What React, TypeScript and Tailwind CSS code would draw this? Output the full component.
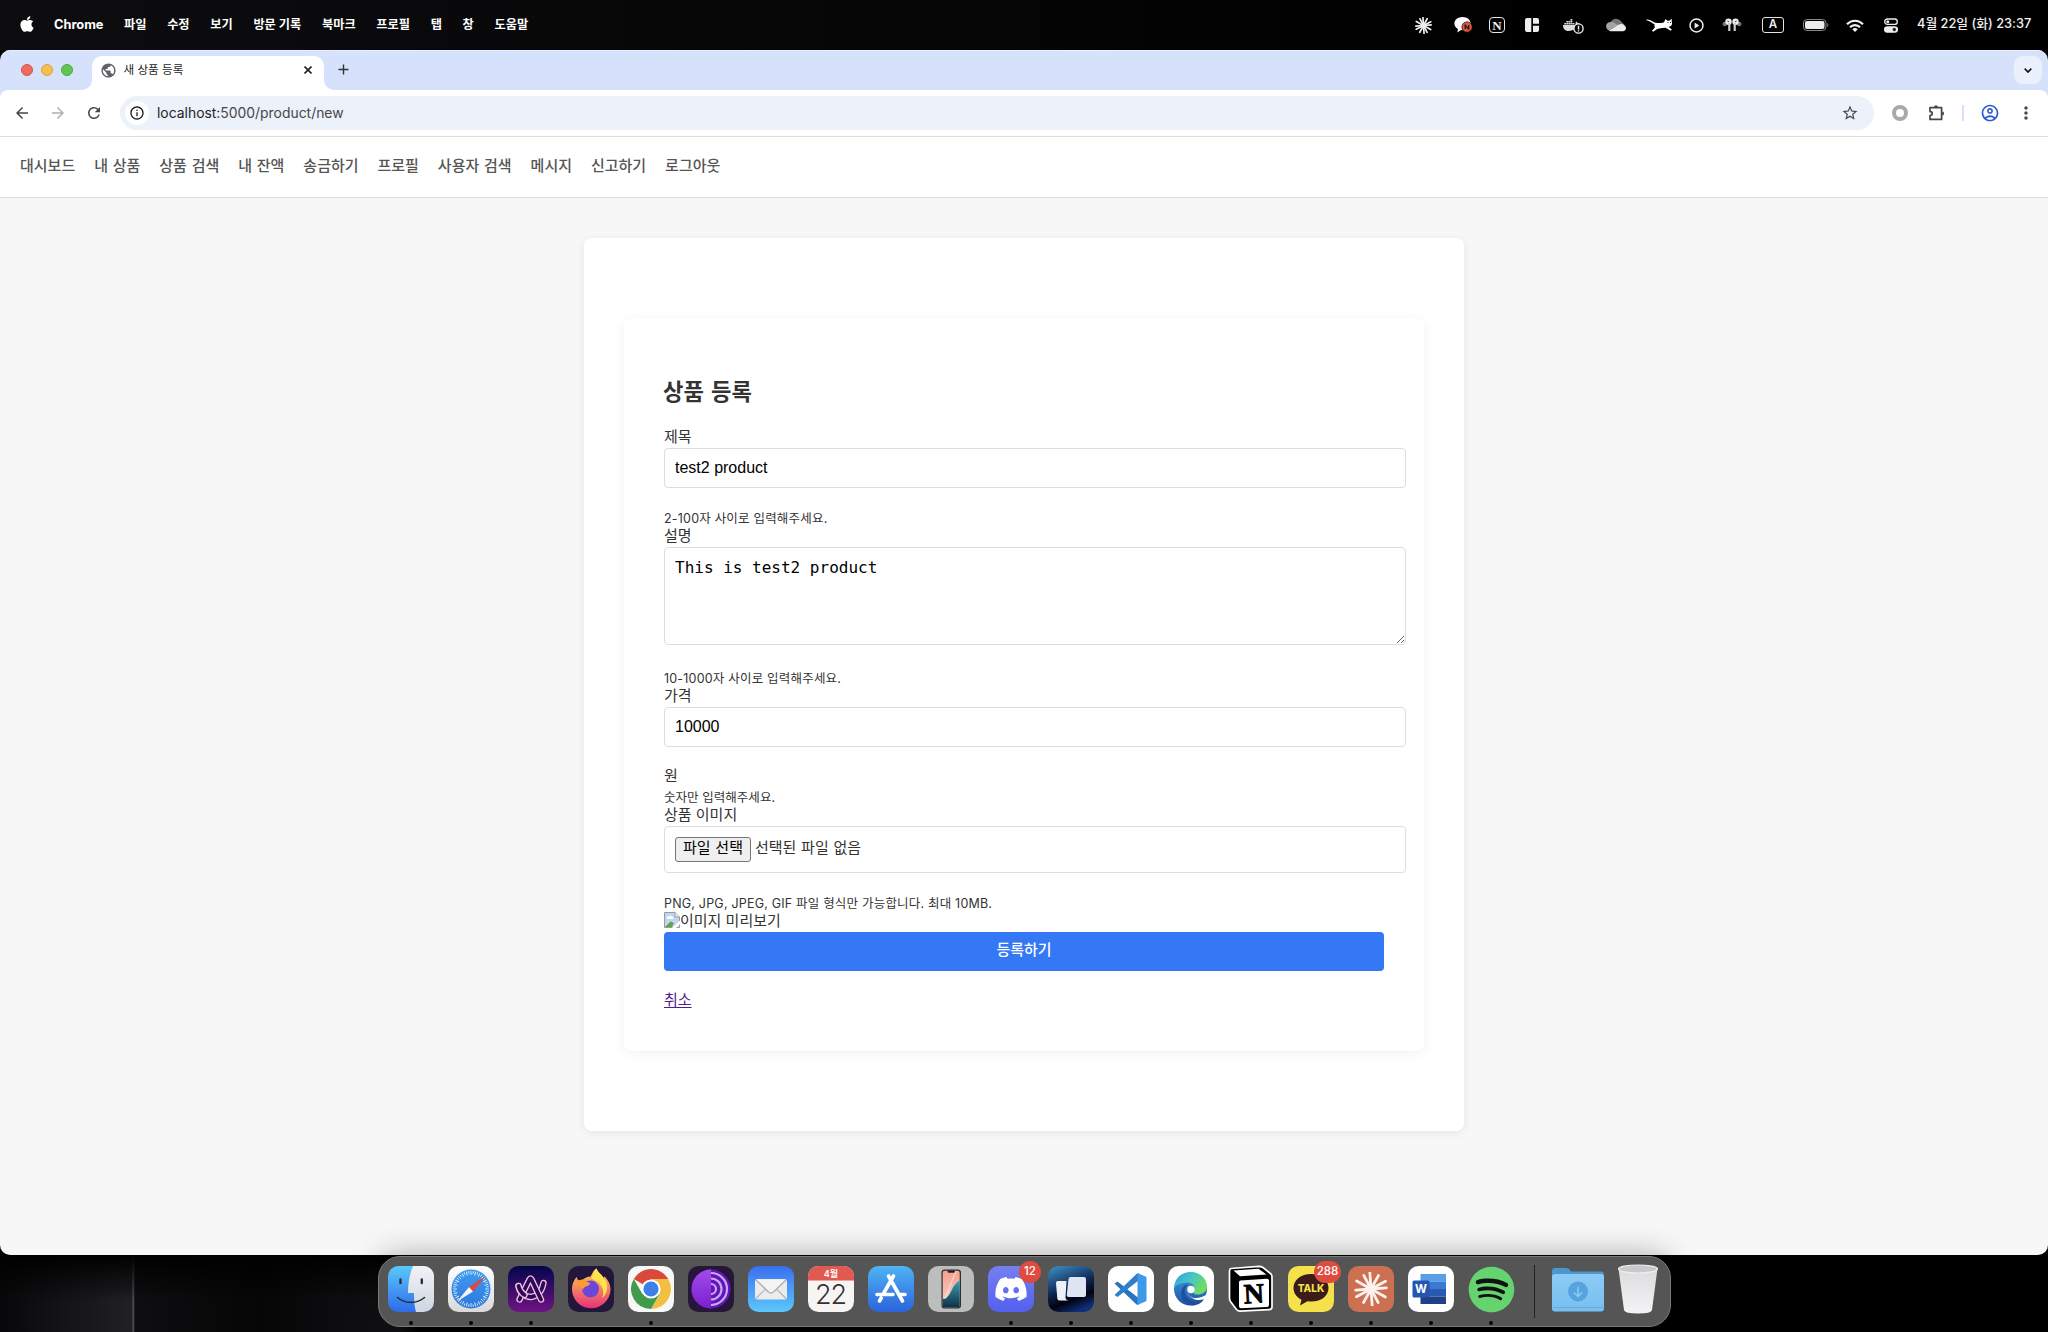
import React from "react";
import { FaApple, FaDiscord, FaDocker, FaSpotify } from "react-icons/fa";
import {
  MdAdd,
  MdArrowBack,
  MdArrowForward,
  MdInfoOutline,
  MdMoreVert,
  MdOutlineAccountCircle,
  MdPublic,
  MdRefresh,
  MdStarOutline,
} from "react-icons/md";

const rays = (n: number) => Array.from({ length: n }, (_, i) => (i * 360) / n);

function Burst({ className, color, width }: { className: string; color: string; width: number }) {
  return (
    <svg viewBox="0 0 32 32" className={className}>
      {rays(12).map((a, i) => (
        <line
          key={a}
          x1="16"
          y1="16"
          x2="16"
          y2={i % 2 ? 1.5 : 0.5}
          stroke={color}
          strokeWidth={width}
          strokeLinecap="round"
          transform={`rotate(${a + (i % 3) * 3 - 4} 16 16)`}
        />
      ))}
    </svg>
  );
}

/* ---------- menu bar ---------- */

const menus = ["파일", "수정", "보기", "방문 기록", "북마크", "프로필", "탭", "창", "도움말"];

function MenuBar() {
  return (
    <header className="flex h-[50px] items-center bg-gradient-to-r from-[#0d0d0f] via-[#050506] via-50% to-black text-white">
      <FaApple className="ml-[19px] h-[18px] w-[16px] -translate-y-px" />
      <span className="ml-[19px] w-[51px] text-[12.8px] font-bold">Chrome</span>
      <nav className="ml-[19px] flex gap-[20.700px] text-[12.2px] font-semibold">
        {menus.map((m) => (
          <span key={m} className="whitespace-nowrap">{m}</span>
        ))}
      </nav>
      <div className="ml-auto flex items-center">
        <Burst className="h-[17px] w-[17px]" color="#eee" width={3.2} />
        <svg viewBox="0 0 18 18" className="ml-[22px] h-[18px] w-[18px]">
          <path d="M8.500 1C4 1 .4 3.800.4 7.600c0 2.500 1.500 4.300 3.600 5.500L3.300 16.500l3.700-2.400c5.500.4 9.600-2.500 9.600-6.500C16.600 3.800 13 1 8.500 1Z" fill="#fff" />
          <circle cx="13" cy="11" r="5.200" fill="#e2543a" stroke="#000" strokeWidth=".6" />
          <path d="M11.300 13.200V9.300l3.400 3.600V8.900" fill="none" stroke="#222" strokeWidth="1.400" />
        </svg>
        <span className="ml-[17px] flex h-4 w-4 items-center justify-center rounded-[4px] border-[1.5px] border-[#e5e5e5] font-['Liberation_Serif'] text-[13px] leading-none font-bold text-[#eee]">N</span>
        <svg viewBox="0 0 14 14" className="ml-5 h-[14px] w-[14px]" fill="#eee">
          <path d="M2 0H6.300V14H2a2 2 0 0 1-2-2V2a2 2 0 0 1 2-2ZM8 0h4a2 2 0 0 1 2 2V5.800H8ZM8 7.800h6V12a2 2 0 0 1-2 2H8Z" />
        </svg>
        <span className="relative ml-[26px] h-4 w-[19px]">
          <FaDocker className="-ml-0.5 h-4 w-[17px] text-[#ddd]" />
          <svg viewBox="0 0 12 12" className="absolute right-0 -bottom-px h-[11px] w-[11px]">
            <circle cx="6" cy="6" r="5" fill="#000" stroke="#eee" strokeWidth="1.500" />
            <path d="M6 3v4M6 8v1.200" stroke="#eee" strokeWidth="1.600" />
          </svg>
        </span>
        <svg viewBox="0 0 20 14" className="ml-[22px] h-[14px] w-[20px]">
          <path d="M4.500 4.500A6 6 0 0 1 15 3.300L18.500 7 8 9.500Z" fill="#777" />
          <path d="M4.200 4C8 3.800 9.500 6 12 7L3 12.500C-1 10.500-1 4.800 4.200 4Z" fill="#a5a5a5" />
          <path d="M3 12.500 13 6.500C15 5 20 6.500 20 10.300 20 12 18.500 13.200 17 13.200H4.500C3.800 13.200 3.300 13 3 12.500Z" fill="#ececec" />
        </svg>
        <svg viewBox="0 0 27 14" className="ml-5 h-[14px] w-[27px]" fill="#fff">
          <path d="M.5 1.500C4 .8 6.500 3.800 9.500 4.800c3 .6 6 .3 8.500-.6L19.500 1l2 1.700h1.800L25.500.8l.6 5c-.4 2-1.600 2.700-3.600 3l3.300 2.700-1 1.200-5.300-3-3.500.2-4.800 1-4 2.800-1.200-1 3-3.500c-.6-1.200-.7-2.200-.4-3C5.500 5.200 4 2.500.5 2.500Z" />
          <circle cx="22" cy="4.500" r=".6" fill="#000" /><circle cx="24.600" cy="4.500" r=".6" fill="#000" />
        </svg>
        <svg viewBox="0 0 16 16" className="ml-4 h-[15px] w-[15px]">
          <circle cx="8" cy="8" r="6.900" fill="none" stroke="#eee" strokeWidth="1.600" />
          <path d="M6 4.800v6.400l5-3.200Z" fill="#eee" />
        </svg>
        <svg viewBox="0 0 20 14" className="ml-[18px] h-[14px] w-[20px]">
          <circle cx="2.800" cy="6" r="2.300" fill="#777" /><circle cx="17.200" cy="6" r="2.300" fill="#777" />
          <circle cx="6.500" cy="3.800" r="3.200" fill="#eee" /><circle cx="13.500" cy="3.800" r="3.200" fill="#eee" />
          <path d="M7.300 5v8M12.700 5v8" stroke="#ccc" strokeWidth="2.200" />
          <path d="M5.500 3l1.500 1M14.500 3 13 4" stroke="#333" strokeWidth="1" />
        </svg>
        <span className="ml-5 flex h-4 w-[22px] items-center justify-center rounded-[3px] border-[1.5px] border-[#e5e5e5] text-[11.5px] leading-none font-semibold text-[#eee]">A</span>
        <svg viewBox="0 0 26 12" className="ml-[19px] h-3 w-[26px]">
          <rect x=".5" y=".5" width="22.500" height="11" rx="3.500" fill="none" stroke="#888" />
          <rect x="2" y="2" width="19.500" height="8" rx="2" fill="#ececec" />
          <path d="M24.300 4c1.400.6 1.400 3.400 0 4Z" fill="#888" />
        </svg>
        <svg viewBox="0 0 18 13" className="ml-[17px] h-[13px] w-[18px]" fill="none" stroke="#f2f2f2" strokeWidth="2.200">
          <path d="M1 5.200C5.500.6 12.500.6 17 5.200M4 8.200c2.800-2.900 7.200-2.900 10 0" />
          <path d="M6.300 10.200Q9 8 11.700 10.200L9 13Z" fill="#f2f2f2" stroke="none" />
        </svg>
        <svg viewBox="0 0 14 15" className="ml-[20px] h-[15px] w-[14px]">
          <rect x=".7" y="1" width="12.600" height="5.400" rx="2.700" fill="none" stroke="#eee" strokeWidth="1.300" />
          <circle cx="3.800" cy="3.700" r="1.500" fill="#eee" />
          <rect x="0" y="8.200" width="14" height="6.600" rx="3.300" fill="#eee" />
          <circle cx="10.300" cy="11.500" r="1.700" fill="#222" />
        </svg>
        <span className="mr-4 ml-[19px] w-[115px] -translate-y-px text-[12.8px] font-medium whitespace-nowrap text-[#f0f0f0]">4월 22일 (화) 23:37</span>
      </div>
    </header>
  );
}

/* ---------- browser chrome ---------- */

function TabStrip() {
  return (
    <div className="flex h-10 items-end bg-[#d6e1fb] shadow-[inset_0_1px_0_#e8eefc]">
      <div className="mb-[14px] ml-[21px] flex w-[61px] gap-2">
        <i className="h-3 w-3 rounded-full border border-[#d9534a] bg-[#ed6a5f]" />
        <i className="h-3 w-3 rounded-full border border-[#dfa03c] bg-[#f5bf4f]" />
        <i className="h-3 w-3 rounded-full border border-[#4faa3c] bg-[#61c554]" />
      </div>
      <svg viewBox="0 0 10 10" className="h-[10px] w-[10px]"><path d="M10 0v10H0A10 10 0 0 0 10 0Z" fill="#fff" /></svg>
      <div className="flex h-[34px] w-[232px] items-center rounded-t-[10px] bg-white pb-[6px]">
        <MdPublic className="ml-[7.500px] h-[17px] w-[17px] text-[#5f6368]" />
        <span className="ml-[7px] pt-px text-[11.6px] text-[#1f1f1f]">새 상품 등록</span>
        <svg viewBox="0 0 8 8" className="mr-3 ml-auto h-2 w-2" stroke="#222" strokeWidth="1.600"><path d="M.5.500l7 7M7.500.500l-7 7" /></svg>
      </div>
      <svg viewBox="0 0 10 10" className="h-[10px] w-[10px]"><path d="M0 0v10H10A10 10 0 0 1 0 0Z" fill="#fff" /></svg>
      <MdAdd className="mb-[12px] ml-px h-[17px] w-[17px] text-[#333]" />
      <span className="mr-[6px] mb-[6px] ml-auto flex h-7 w-7 items-center justify-center rounded-[9px] bg-[#ebf1fc]">
        <svg viewBox="0 0 8 5" className="h-[5px] w-2" fill="none" stroke="#111" strokeWidth="1.700"><path d="M.7.700 4 4 7.300.700" /></svg>
      </span>
    </div>
  );
}

function Toolbar() {
  return (
    <div className="bg-[#d6e1fb]">
      <div className="flex h-[47px] items-center rounded-t-[8px] border-b border-[#dddddd] bg-white">
        <MdArrowBack className="ml-[13px] h-[18px] w-[18px] text-[#474747]" />
        <MdArrowForward className="ml-[18px] h-[18px] w-[18px] text-[#b0b0b0]" />
        <MdRefresh className="ml-[18px] h-[18px] w-[18px] text-[#474747]" />
        <div className="ml-[17px] flex h-[34px] w-[1754px] items-center rounded-full bg-[#ecf1fa]">
          <span className="ml-[5px] flex h-6 w-6 items-center justify-center rounded-full bg-white">
            <MdInfoOutline className="h-4 w-4 text-[#1f1f1f]" />
          </span>
          <span className="ml-[8px] text-[13.900px] text-[#1f1f1f]">
            localhost:<span className="text-[#474747]">5000/product/new</span>
          </span>
          <MdStarOutline className="mr-[15px] ml-auto h-[18px] w-[18px] text-[#474747]" />
        </div>
        <i className="ml-[18px] h-4 w-4 rounded-full border-[4.500px] border-[#a8a8a8]" />
        <svg viewBox="0 0 18 18" className="ml-5 h-[18px] w-[18px]" fill="none" stroke="#474747" strokeWidth="1.700">
          <path d="M2 3.700H13.600V15.400H2V11.500C5 11.300 5 7.800 2 7.600Z" strokeLinejoin="round" />
          <path d="M6.100 3.200a1.900 1.900 0 0 1 3.800 0ZM14.200 7.600a1.900 1.900 0 0 1 0 3.800Z" fill="#474747" stroke="none" />
        </svg>
        <i className="ml-[16px] h-4 w-[2px] bg-[#d3e1fb]" />
        <MdOutlineAccountCircle className="ml-[16px] h-5 w-5 text-[#2c5bd0]" />
        <MdMoreVert className="ml-[16px] h-5 w-5 text-[#474747]" />
      </div>
    </div>
  );
}

/* ---------- page ---------- */

const links = ["대시보드", "내 상품", "상품 검색", "내 잔액", "송금하기", "프로필", "사용자 검색", "메시지", "신고하기", "로그아웃"];

function Label({ children, className = "h-5 pb-0.5" }: { children: React.ReactNode; className?: string }) {
  return <div className={`flex items-center text-[15px] whitespace-pre text-[#333] ${className}`}>{children}</div>;
}

function Hint({ children, className = "tracking-[0.2px]" }: { children: React.ReactNode; className?: string }) {
  return (
    <div className={`flex h-[19px] items-center pt-[3px] text-[12.500px] whitespace-pre text-[#333] ${className}`}>{children}</div>
  );
}

const box = "w-[742px] rounded-[4px] border border-[#ddd] bg-white px-[10px] text-black outline-none";

function ProductPage() {
  return (
    <div className="flex grow flex-col bg-[#f7f7f7]">
      <nav className="flex h-[61px] items-center gap-[18.950px] border-b border-[#dedede] bg-white pb-0.5 pl-5 text-[15px] font-medium text-[#555] [word-spacing:0.8px]">
        {links.map((l) => (
          <span key={l} className="whitespace-nowrap">{l}</span>
        ))}
      </nav>
      <main className="mx-auto mt-10 h-[893px] w-[880px] rounded-[8px] bg-white p-10 shadow-[0_2px_10px_rgba(0,0,0,0.07)]">
        <form className="mt-10 h-[733px] rounded-[8px] bg-white px-10 pt-[60px] shadow-[0_2px_12px_rgba(0,0,0,0.06)]">
          <h2 className="mb-5 -ml-px flex h-7 items-center text-[22.200px] font-bold text-[#333] [word-spacing:2px]">상품 등록</h2>
          <Label className="h-[22px]">제목</Label>
          <input className={`${box} mb-5 block h-10 font-['Liberation_Sans'] text-[16px]`} defaultValue="test2 product" />
          <Hint>2-100자 사이로 입력해주세요.</Hint>
          <Label>설명</Label>
          <textarea
            className={`${box} mb-[23px] block h-[98px] resize py-[10px] font-['DejaVu_Sans_Mono'] text-[16px] leading-[19px]`}
            defaultValue="This is test2 product"
          />
          <Hint>10-1000자 사이로 입력해주세요.</Hint>
          <Label>가격</Label>
          <input className={`${box} mb-[19px] block h-10 font-['Liberation_Sans'] text-[16px]`} defaultValue="10000" />
          <Label className="h-[21px]">원</Label>
          <Hint className="tracking-[0.04px]">숫자만 입력해주세요.</Hint>
          <Label>상품 이미지</Label>
          <div className={`${box} mb-5 flex h-[47px] items-center text-[15px] [word-spacing:0.5px]`}>
            <span className="flex h-[25px] w-[76px] items-center justify-center rounded-[3px] border border-[#767676] bg-[#efefef] pb-[3px] whitespace-nowrap">파일 선택</span>
            <span className="ml-1 pb-[3px] text-[#333]">선택된 파일 없음</span>
          </div>
          <Hint>PNG, JPG, JPEG, GIF 파일 형식만 가능합니다. 최대 10MB.</Hint>
          <div className="flex h-5 items-start">
            <svg viewBox="0 0 16 16" className="h-4 w-4">
              <path d="M.5.500H11L15.500 5V15.500H.500Z" fill="#c3d5f5" stroke="#9a9a9a" />
              <path d="M1 15 6.500 9.500 10 11 8 15Z" fill="#5fa744" />
              <path d="M3 6.500a1.500 1.500 0 0 1 2-2 2 2 0 0 1 3.500.5 1 1 0 0 1 0 2H3.500Z" fill="#fff" />
              <path d="M8 16 16 8.500V12L12 16Z" fill="#fff" />
              <path d="M11 .5V5h4.500" fill="#eee" stroke="#9a9a9a" />
            </svg>
            <Label className="h-[18px]">이미지 미리보기</Label>
          </div>
          <button type="button" className="mb-[19px] flex h-[39px] w-[720px] items-center justify-center rounded-[4px] bg-[#3478f6] pb-[3px] text-[15px] font-medium text-white">등록하기</button>
          <a className="block h-5 w-fit text-[15px] leading-[20px] text-[#551a8b] underline underline-offset-[2px]">취소</a>
        </form>
      </main>
    </div>
  );
}

/* ---------- dock ---------- */

function Tile({ fill, children }: { fill: string; children: React.ReactNode }) {
  return (
    <svg viewBox="0 0 46 46" className="h-[46px] w-[46px] overflow-visible">
      <rect width="46" height="46" rx="10.500" fill={fill} />
      {children}
    </svg>
  );
}

function Gradients() {
  const g: [string, string, string][] = [
    ["gFinder", "#5ac8fa", "#2f6bea"],
    ["gFace", "#f2f2f5", "#cfd6e2"],
    ["gGrey", "#ffffff", "#d9d9d9"],
    ["gSafari", "#3f9bf0", "#2d78dc"],
    ["gArc", "#04054c", "#6d1482"],
    ["gFox", "#ffd54a", "#e8307a"],
    ["gTor", "#a24bea", "#7a20cf"],
    ["gMail", "#3a6fee", "#5cc7fb"],
    ["gStore", "#4fb4f3", "#2b63dc"],
    ["gScreen", "#f4a08c", "#f9d3cc"],
    ["gTeal", "#3fa0b5", "#0c3147"],
    ["gDiscord", "#7480f0", "#5460ee"],
    ["gEdge", "#38a3e2", "#1e50a0"],
    ["gTrash", "#dcdcde", "#f3f3f5"],
    ["gFolder", "#8ccbf5", "#77bff0"],
  ];
  return (
    <svg className="absolute h-0 w-0">
      <defs>
        {g.map(([id, a, b]) => (
          <linearGradient key={id} id={id} x1="0" y1="0" x2="0" y2="1">
            <stop offset="0" stopColor={a} />
            <stop offset="1" stopColor={b} />
          </linearGradient>
        ))}
        <linearGradient id="gStage" x1="0.2" y1="0" x2="0.6" y2="1">
          <stop offset="0" stopColor="#3a86b8" />
          <stop offset=".5" stopColor="#0c2450" />
          <stop offset=".75" stopColor="#02030f" />
          <stop offset="1" stopColor="#0f2f78" />
        </linearGradient>
        <linearGradient id="gEdgeTop" x1="0" y1="0" x2="1" y2=".5">
          <stop offset="0" stopColor="#2f9be0" />
          <stop offset=".5" stopColor="#45c4c8" />
          <stop offset="1" stopColor="#72dd62" />
        </linearGradient>
      </defs>
    </svg>
  );
}

const Finder = () => (
  <Tile fill="url(#gFinder)">
    <path d="M25 0H35.500A10.500 10.500 0 0 1 46 10.500V35.500A10.500 10.500 0 0 1 35.500 46H28C26.500 41 26 34 26 27H20C20 16 22 7 25 0Z" fill="url(#gFace)" />
    <path d="M12.500 13.500v3.500M33.800 13.500v3.500" stroke="#26303c" strokeWidth="2.400" strokeLinecap="round" />
    <path d="M9.500 31.500C17 38 29 38 36.500 31.500" fill="none" stroke="#26303c" strokeWidth="1.600" strokeLinecap="round" />
  </Tile>
);

const Safari = () => (
  <Tile fill="url(#gGrey)">
    <circle cx="23" cy="23" r="19.500" fill="url(#gSafari)" />
    {rays(48).map((a, i) => (
      <line key={a} x1="23" y1="5" x2="23" y2={i % 2 ? 7.500 : 9} stroke="#dcecff" strokeWidth=".9" transform={`rotate(${a} 23 23)`} />
    ))}
    <path d="M37.500 10 25 25.500 21 21Z" fill="#e3453a" />
    <path d="M9 35.500 21 21 25 25.500Z" fill="#f4f4f4" />
  </Tile>
);

const ArcStroke = ({ d }: { d: string }) => (
  <>
    <path d={d} stroke="#f9bfe0" strokeWidth="6.400" />
    <path d={d} stroke="#2a0a5c" strokeWidth="3.800" />
  </>
);

const Arc = () => (
  <Tile fill="url(#gArc)">
    <g fill="none" strokeLinejoin="round" strokeLinecap="round">
      <ArcStroke d="M10.500 20C11.500 27 17 31 23 31 29.500 30 34 25 35.500 17" />
      <ArcStroke d="M11.500 33.500 21.500 13.500Q22.500 11.500 23.500 13.500L33 33.500" />
      <ArcStroke d="M10.500 20C11.500 24 13.500 27 16.500 29" />
    </g>
  </Tile>
);

const Firefox = () => (
  <Tile fill="#22173a">
    <path d="M4 22C4 18 6 14 8.500 11L10 14.500 15 13.500C20 10 22 11 22 11 24 9 25 4 28.500 2.500 30 7 33.500 8 35 12L36.500 10.500C40 14 42.500 18 42.500 24A19.200 19.200 0 0 1 4 22Z" fill="url(#gFox)" />
    <path d="M28.500 2.500C30 7 34 8 36 12.500 41 18 40 28 34 32 38 24 32 15 24 13 24 9 26 5 28.500 2.500Z" fill="#ffe04f" />
    <circle cx="22.500" cy="23" r="8.500" fill="#6b46d8" />
    <path d="M8.500 11 10 14.500 15 13.500 22.500 17.500C20 21 15.500 20 15 24 13 20 8 19 8.500 11Z" fill="#fb9a36" />
  </Tile>
);

const Chrome = () => (
  <Tile fill="#f7f7f7">
    <path d="M23 23 5.800 13A19.900 19.900 0 0 1 40.200 13Z" fill="#d8493c" />
    <path d="M23 23V13H40.200A19.900 19.900 0 0 1 23 42.900L32 28Z" fill="#f3bf42" />
    <path d="M23 23 14.400 28 5.800 13A19.900 19.900 0 0 0 23 42.900L31.600 28Z" fill="#429a4d" />
    <circle cx="23" cy="23" r="9.600" fill="#fff" />
    <circle cx="23" cy="23" r="7.600" fill="#3f7fe8" />
  </Tile>
);

const Tor = () => (
  <Tile fill="#26163a">
    <circle cx="23" cy="23" r="19.500" fill="#5f17b5" />
    <path d="M23 3.500a19.500 19.500 0 0 0 0 39Z" fill="url(#gTor)" />
    <path d="M23 7a16 16 0 0 1 0 32M23 12.500a10.500 10.500 0 0 1 0 21M23 18a5 5 0 0 1 0 10" fill="none" stroke="#cfa6f5" strokeWidth="2.200" />
  </Tile>
);

const Mail = () => (
  <Tile fill="url(#gMail)">
    <rect x="7" y="13" width="32" height="20.500" rx="2.500" fill="#ececec" />
    <path d="M8 32.500 18.500 22M38 32.500 27.500 22" stroke="#b5b8bd" strokeWidth="1.200" />
    <path d="M8 14 20.500 26Q23 28 25.500 26L38 14" fill="#f4f4f4" stroke="#a9adb3" strokeWidth="1.300" />
  </Tile>
);

const Calendar = () => (
  <Tile fill="#f6f5f3">
    <path d="M0 14.500V10.500A10.500 10.500 0 0 1 10.500 0H35.500A10.500 10.500 0 0 1 46 10.500V14.500Z" fill="#e05a50" />
    <text x="23" y="11" textAnchor="middle" fontSize="9" fontWeight="600" fill="#fff">4월</text>
    <text x="22.500" y="38" textAnchor="middle" fontSize="27" fontWeight="300" letterSpacing="-1" fill="#333">22</text>
  </Tile>
);

const AppStore = () => (
  <Tile fill="url(#gStore)">
    <g stroke="#fff" strokeWidth="3.600" strokeLinecap="round">
      <path d="M25.500 10 15.500 27.500M20.500 10 34.500 35M9 28.500H25M31 28.500H37M13.200 32 11.500 35" />
    </g>
  </Tile>
);

const Phone = () => (
  <Tile fill="#bcbdbd">
    <rect x="13.500" y="3.500" width="19.500" height="39" rx="3" fill="#2c2f33" />
    <rect x="14.700" y="4.800" width="17" height="36.500" rx="2" fill="url(#gScreen)" />
    <path d="M31.700 14.500C22 20 24 32 14.700 33V39.500Q14.700 41.300 16.500 41.300H29.900Q31.700 41.300 31.700 39.500Z" fill="url(#gTeal)" />
    <path d="M28 5 17 33" stroke="#fff" strokeWidth="2" opacity=".35" />
    <rect x="19.500" y="4.500" width="7.500" height="2.200" rx="1.100" fill="#222" />
  </Tile>
);

const Discord = () => (
  <Tile fill="url(#gDiscord)">
    <FaDiscord x={6} y={6} size={34} color="#fff" />
  </Tile>
);

const Stage = () => (
  <Tile fill="url(#gStage)">
    <path d="M10 15H18.500L17.500 31.500Q17.500 34 21 34.500H11.500Q9.500 34.500 9.300 32.500L8 17Q8 15 10 15Z" fill="#eef0f8" />
    <path d="M22.500 11H36Q38 11 38 13V29Q38 31 36 31H21Q18.500 31 18.800 28.500L20.500 13Q20.800 11 22.500 11Z" fill="#dfe4f3" />
  </Tile>
);

const VSCode = () => (
  <Tile fill="#fff">
    <path d="M6.500 17.500 9.500 15.500 30.500 32V39L28.500 38.500Z" fill="#2a74bd" />
    <path d="M6.500 29 9.500 31 30.500 14.500V7L28.500 8Z" fill="#2f7fcb" />
    <path d="M29.500 7 38.500 11V35L29.500 39Z" fill="#3e9ae8" />
  </Tile>
);

const Edge = () => (
  <Tile fill="#fff">
    <circle cx="22.500" cy="23" r="16.500" fill="url(#gEdge)" />
    <path d="M6 22C7 11 14 6 23 6 32 6 39 13 39 20.500 39 26 34 28.500 30 28.500 26 28.500 25 27 26 25 28 21 25 16.500 20 16.500 13 16.500 8 19 6 22Z" fill="url(#gEdgeTop)" />
    <path d="M20 18C14 24 17 34 26 35.500 31 36 34 34.500 36.500 32.500 34 37 29 39.500 24 39.500 14 38 11 28 15 21Q17 18.500 20 18Z" fill="#1f4f9c" />
    <path d="M20.500 20C17.500 23 19 29.500 24 31.500 29 33 34 31.500 39.500 28L40 32 36.500 33C31 35 27 34 24 32 18 29 18 22 20.500 20Z" fill="#fff" />
    <circle cx="23" cy="23.500" r="3.700" fill="#fff" />
  </Tile>
);

const Notion = () => (
  <svg viewBox="0 0 46 46" className="h-[46px] w-[46px] overflow-visible">
    <path d="M3 2.500 31 .3Q33 .3 35 1.500L43 8Q44 9 44 11V41Q44 43.500 41 43.700L12 45.200Q10 45.200 8.500 43.500L2.500 35.500Q1.500 34 1.500 32V5Q1.500 2.800 3 2.500Z" fill="#000" stroke="#fff" strokeWidth="1.700" />
    <path d="M5.500 4.500 30.500 2.800 38.500 8.500 12 10.300Z" fill="#fff" />
    <path d="M12.500 14.500 39 12.700Q41 12.700 41 14.500V39Q41 40.800 39 41L13 42.300Q11 42.300 11 40.500V16.500Q11 14.600 12.500 14.500Z" fill="#fff" />
    <text x="26" y="37" textAnchor="middle" fontSize="28" fontWeight="700" fontFamily="Liberation Serif, serif" stroke="#000" strokeWidth=".8" transform="rotate(-3 26 28)">N</text>
  </svg>
);

const Talk = () => (
  <Tile fill="#f5e14b">
    <path d="M23 8C13 8 5.500 14 5.500 22 5.500 27 8.500 31.300 13.500 33.700L12 39.500 19.500 35.300C32 37 40.500 30.500 40.500 22 40.500 14 33 8 23 8Z" fill="#3a1d1b" />
    <text x="23" y="26" textAnchor="middle" fontSize="10" fontWeight="800" fill="#f5e14b">TALK</text>
  </Tile>
);

const Word = () => (
  <Tile fill="#fff">
    <rect x="12.500" y="8" width="25.500" height="7.500" fill="#5a9fe6" />
    <rect x="12.500" y="15.500" width="25.500" height="7.500" fill="#3c79d4" />
    <rect x="12.500" y="23" width="25.500" height="7.500" fill="#2b58b2" />
    <rect x="12.500" y="30.500" width="25.500" height="7.500" fill="#1f3f86" />
    <rect x="4.500" y="14.500" width="17" height="17" rx="1.500" fill="#2455b0" />
    <text x="13" y="27" textAnchor="middle" fontSize="11.500" fontWeight="700" fill="#fff">W</text>
  </Tile>
);

const Claude = () => (
  <div className="flex h-[46px] w-[46px] items-center justify-center rounded-[10.500px] bg-[#cc7051]">
    <Burst className="h-[34px] w-[34px]" color="#fbf2ee" width={2.6} />
  </div>
);

const Spotify = () => (
  <div className="relative flex h-[46px] w-[46px] items-center justify-center">
    <i className="absolute h-10 w-10 rounded-full bg-[#111]" />
    <FaSpotify className="relative h-[47px] w-[47px] shrink-0 text-[#65d46e]" />
  </div>
);

const apps: { icon: () => React.ReactElement; open?: boolean; badge?: string }[] = [
  { icon: Finder, open: true },
  { icon: Safari, open: true },
  { icon: Arc, open: true },
  { icon: Firefox },
  { icon: Chrome, open: true },
  { icon: Tor },
  { icon: Mail },
  { icon: Calendar },
  { icon: AppStore },
  { icon: Phone },
  { icon: Discord, open: true, badge: "12" },
  { icon: Stage, open: true },
  { icon: VSCode, open: true },
  { icon: Edge, open: true },
  { icon: Notion, open: true },
  { icon: Talk, open: true, badge: "288" },
  { icon: Claude, open: true },
  { icon: Word, open: true },
  { icon: Spotify, open: true },
];

function Dock() {
  return (
    <div className="relative mt-px ml-[378px] flex h-[71px] w-[1293px] rounded-[22px] border border-[#7a7a7a] bg-[#555] pl-[9px] shadow-[0_0_32px_rgba(0,0,0,0.32)]">
      <div className="flex gap-[14px]">
        {apps.map(({ icon: Icon, open, badge }, i) => (
          <div key={i} className="relative flex w-[46px] flex-col items-center pt-[9px]">
            <Icon />
            {open && <i className="mt-[9px] h-1 w-1 rounded-full bg-black" />}
            {badge && (
              <span className={`absolute top-1 flex h-[22px] items-center justify-center rounded-full bg-[#e04b3f] text-[11.500px] font-medium text-white ${badge.length > 2 ? "-right-[7px] w-[27px]" : "-right-[7px] w-[22px]"}`}>
                {badge}
              </span>
            )}
          </div>
        ))}
      </div>
      <i className="mt-2 ml-5 h-[53px] w-px bg-[#222]" />
      <svg viewBox="0 0 52 46" className="mt-[10px] ml-[17px] h-[46px] w-[52px]">
        <path d="M0 4Q0 1 3 1H14Q16 1 17.500 2.500L19 4.500H49Q52 4.500 52 7.500V20H0Z" fill="#4a96cd" />
        <rect y="7" width="52" height="37.500" rx="3" fill="url(#gFolder)" />
        <path d="M1 40.500H51" stroke="#65aee2" />
        <circle cx="26" cy="24.500" r="10" fill="#57a3dd" />
        <path d="M26 19.500v9.500M22 25.500l4 4 4-4" fill="none" stroke="#8ccbf5" strokeWidth="1.500" />
      </svg>
      <svg viewBox="0 0 40 50" className="mt-[7px] ml-[14px] h-[50px] w-10">
        <path d="M.5 4.500 6 46Q6.500 49.500 20 49.500T34 46L39.500 4.500Z" fill="url(#gTrash)" />
        <ellipse cx="20" cy="5" rx="19.500" ry="4" fill="#c9c9cb" stroke="#efefef" strokeWidth="1.200" />
      </svg>
    </div>
  );
}

export default function App() {
  return (
    <div className="flex h-[1332px] w-[2048px] flex-col overflow-hidden bg-black font-[Inter,'Noto_Sans_CJK_KR',sans-serif]">
      <Gradients />
      <MenuBar />
      <div className="flex h-[1205px] flex-col overflow-hidden rounded-[10px]">
        <TabStrip />
        <Toolbar />
        <ProductPage />
      </div>
      <div className="flex h-[77px] bg-[linear-gradient(to_bottom,#000,transparent_60%),linear-gradient(to_right,#08080a_0,#202025_132px,#5a5a60_133px,#0e0e10_135px,#060607_260px,#121215_398px,#000_420px,#000_100%)]">
        <Dock />
      </div>
    </div>
  );
}
